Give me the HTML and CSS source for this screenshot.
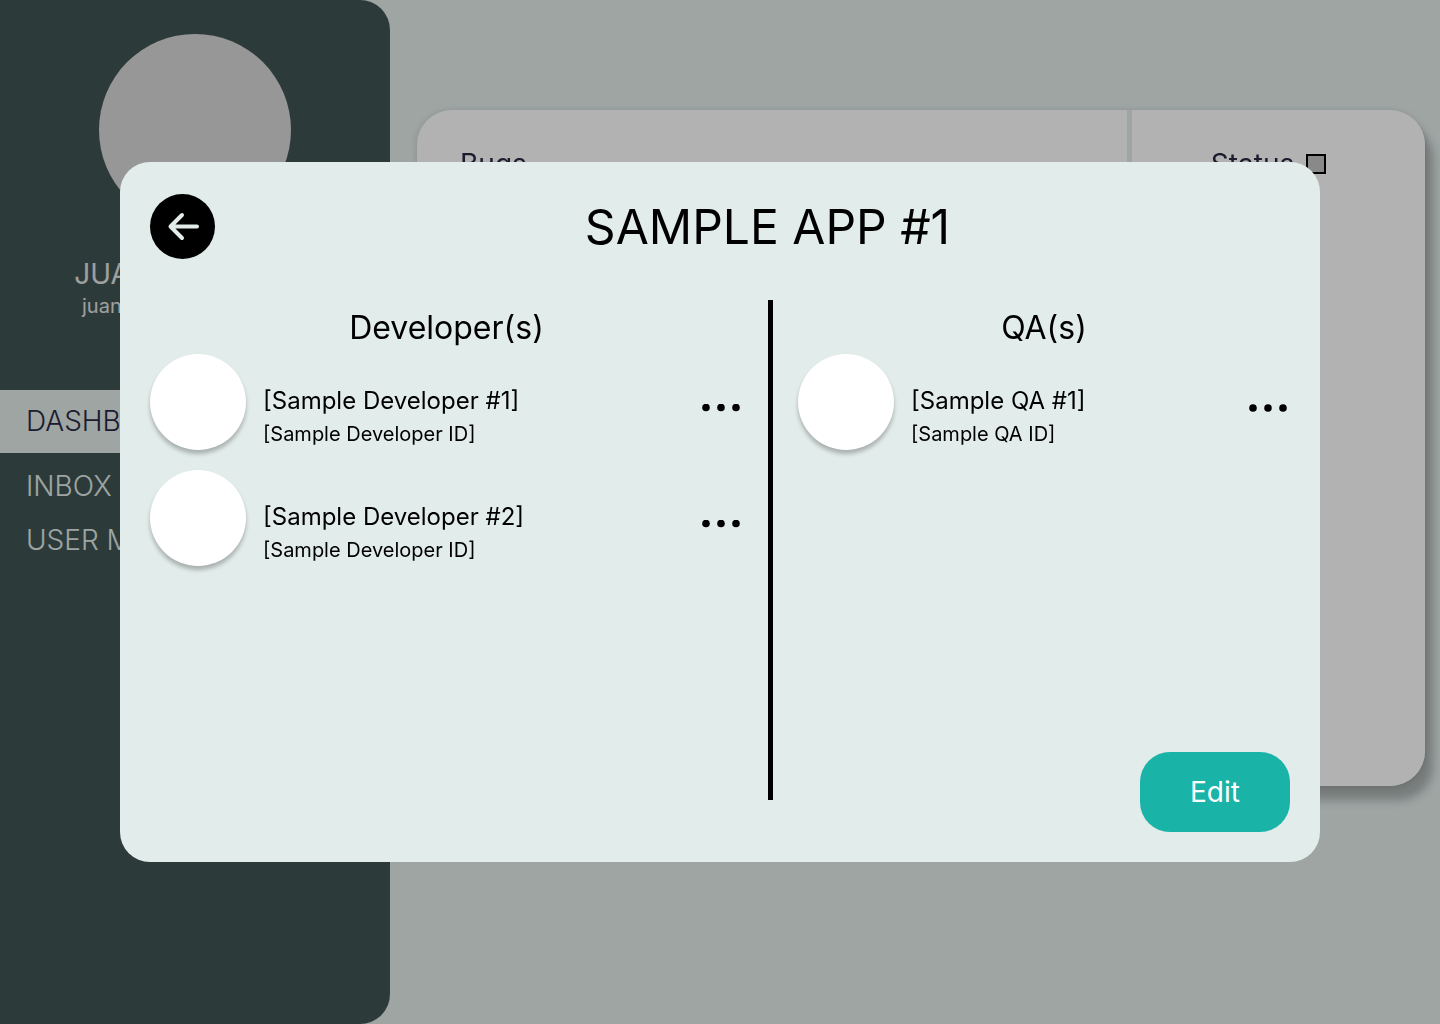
FILE: index.html
```html
<!DOCTYPE html>
<html lang="en">
<head>
<meta charset="utf-8">
<title>Sample App #1</title>
<link rel="stylesheet" href="styles.css">
</head>
<body>
<div class="page">
  <aside class="sidebar">
    <div class="profile">
      <div class="profile-photo"></div>
      <p class="profile-name">JUAN DELA CRUZ</p>
      <p class="profile-mail">juandelacruz@mail.com</p>
    </div>
    <nav class="nav">
      <a class="nav-link active" href="#">DASHBOARD</a>
      <a class="nav-link" href="#">INBOX</a>
      <a class="nav-link" href="#">USER MANAGEMENT</a>
    </nav>
  </aside>
  <main class="content">
    <section class="board">
      <div class="board-main"><h2 class="board-title">Bugs</h2></div>
      <div class="board-side">
        <label class="board-title" for="status">Status</label>
        <input class="status-box" id="status" type="checkbox">
      </div>
    </section>
  </main>
</div>

<div class="scrim">
  <div class="modal" role="dialog" aria-labelledby="modal-title">
    <header class="modal-header">
      <button class="back" type="button" aria-label="Back">
        <svg width="65" height="65" viewBox="0 0 65 65" fill="none" stroke="currentColor" stroke-width="4" stroke-linecap="round" stroke-linejoin="round"><path d="M47 32.500H20.500M32 21L20.500 32.500L32 44"/></svg>
      </button>
      <h1 class="modal-title" id="modal-title">SAMPLE APP #1</h1>
    </header>
    <div class="columns">
      <section class="column">
        <h2 class="column-title">Developer(s)</h2>
        <ul class="people">
          <li class="person">
            <div class="photo"></div>
            <div class="details"><p class="name">[Sample Developer #1]</p><p class="id">[Sample Developer ID]</p></div>
            <button class="more" type="button" aria-label="More options"><svg width="38" height="8" viewBox="0 0 38 8"><circle cx="4" cy="3.500" r="3.800"/><circle cx="19" cy="3.500" r="3.800"/><circle cx="34" cy="3.500" r="3.800"/></svg></button>
          </li>
          <li class="person">
            <div class="photo"></div>
            <div class="details"><p class="name">[Sample Developer #2]</p><p class="id">[Sample Developer ID]</p></div>
            <button class="more" type="button" aria-label="More options"><svg width="38" height="8" viewBox="0 0 38 8"><circle cx="4" cy="3.500" r="3.800"/><circle cx="19" cy="3.500" r="3.800"/><circle cx="34" cy="3.500" r="3.800"/></svg></button>
          </li>
        </ul>
      </section>
      <div class="divider"></div>
      <section class="column">
        <h2 class="column-title">QA(s)</h2>
        <ul class="people">
          <li class="person">
            <div class="photo"></div>
            <div class="details"><p class="name">[Sample QA #1]</p><p class="id">[Sample QA ID]</p></div>
            <button class="more" type="button" aria-label="More options"><svg width="38" height="8" viewBox="0 0 38 8"><circle cx="4" cy="4" r="3.800"/><circle cx="19" cy="4" r="3.800"/><circle cx="34" cy="4" r="3.800"/></svg></button>
          </li>
        </ul>
        <button class="edit" type="button">Edit</button>
      </section>
    </div>
  </div>
</div>
</body>
</html>
```
FILE: styles.css
```css
* { box-sizing: border-box; }

body, h1, h2, p, ul { margin: 0; padding: 0; }
h1, h2 { font-weight: 400; }
ul { list-style: none; }
button { border: 0; padding: 0; background: none; font: inherit; cursor: pointer; }

body {
  font-family: Inter, "Liberation Sans", sans-serif;
  color: #000;
  background: #e2ecea;
}

.page { display: flex; min-height: 100vh; }

/* Sidebar */
.sidebar {
  flex: 0 0 390px;
  background: #405553;
  border-radius: 0 30px 30px 0;
}
.profile {
  display: flex;
  flex-direction: column;
  align-items: center;
  padding-top: 34px;
  height: 390px;
  color: #e4e4e4;
}
.profile-photo {
  width: 192px;
  height: 192px;
  margin-bottom: 30px;
  border-radius: 50%;
  background: #d9d9d9;
}
.profile-name { font-size: 28px; line-height: 36px; }
.profile-mail { font-size: 20px; line-height: 28px; }
.nav { display: flex; flex-direction: column; }
.nav-link {
  padding-left: 26px;
  font-size: 28px;
  font-weight: 300;
  line-height: 54px;
  color: #e2ecea;
  text-decoration: none;
}
.nav-link.active {
  margin-bottom: 6px;
  line-height: 63px;
  color: #292944;
  background: #e2ecea;
}

/* Bug board */
.content {
  flex: 1;
  padding: 110px 15px 0 27px;
  filter: drop-shadow(0 1px 3px rgba(0, 0, 0, 0.14)) drop-shadow(8px 14px 4px rgba(0, 0, 0, 0.24));
}
.board {
  display: flex;
  gap: 5px;
  min-height: 676px;
  border-radius: 35px;
  overflow: hidden;
  background: #e2ecea;
}
.board-main { flex: 1; padding: 36px 43px; background: #fff; }
.board-side {
  display: flex;
  flex: 0 0 293px;
  justify-content: center;
  align-items: flex-start;
  gap: 12px;
  padding: 36px 40px 36px 20px;
  background: #fff;
}
.board-title { font-size: 28px; line-height: 36px; color: #292944; }
.status-box {
  appearance: none;
  width: 20px;
  height: 20px;
  margin: 8px 0 0;
  border: 2px solid #000;
  background: #c4c4c4;
}

/* Modal */
.scrim {
  position: fixed;
  inset: 0;
  display: flex;
  align-items: center;
  justify-content: center;
  padding: 0 120px;
  background: rgba(0, 0, 0, 0.3);
}
.modal {
  flex: 1;
  padding: 32px 30px 30px;
  border-radius: 30px;
  background: #e2ecea;
}
.modal-header { display: flex; align-items: center; margin: 0 -30px 41px 0; }
.modal-title { flex: 1; font-size: 48px; line-height: 64px; text-align: center; }
.back {
  width: 65px;
  height: 65px;
  border-radius: 50%;
  background: #000;
  color: #e2ecea;
}
.back svg { display: block; }

.columns {
  display: grid;
  grid-template-columns: 593fr 5px 492fr;
  gap: 25px;
  min-height: 532px;
}
.divider { margin-bottom: 32px; background: #000; }
.column { display: flex; flex-direction: column; }
.column-title { padding-top: 2px; font-size: 32px; line-height: 52px; text-align: center; }
.people { display: flex; flex-direction: column; gap: 20px; }
.person { display: flex; align-items: flex-end; }
.photo {
  width: 96px;
  height: 96px;
  border-radius: 50%;
  background: #fff;
  box-shadow: 0 4px 4px rgba(0, 0, 0, 0.25);
}
.details { flex: 1; padding-left: 17px; }
.name { font-size: 24px; line-height: 34px; }
.id { font-size: 20px; line-height: 32px; }
.more { align-self: stretch; padding: 11px 3px 0 0; color: #000; }
.more svg { display: block; fill: currentColor; }
.edit {
  align-self: flex-end;
  width: 150px;
  height: 80px;
  margin-top: auto;
  border-radius: 30px;
  background: #19b3a8;
  color: #fff;
  font-size: 28px;
}
```
